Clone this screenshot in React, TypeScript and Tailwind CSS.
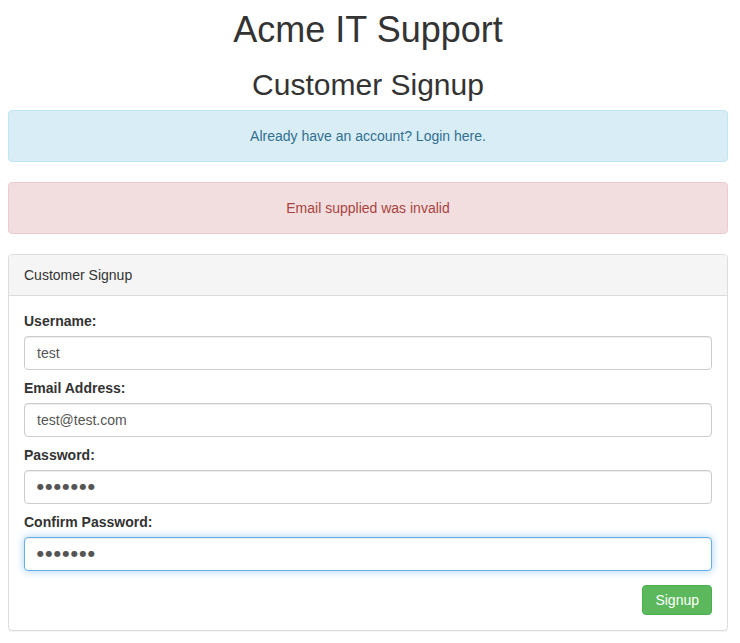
export default function App() {
  const font = { fontFamily: '"Liberation Sans", Arial, sans-serif' };
  const dots = { fontFamily: '"DejaVu Sans", sans-serif' };
  const fields = [
    { label: "Username:", value: "test" },
    { label: "Email Address:", value: "test@test.com" },
    { label: "Password:", value: "●●●●●●●", secret: true },
    { label: "Confirm Password:", value: "●●●●●●●", secret: true, focus: true },
  ];

  return (
    <div style={font} className="min-h-screen bg-white text-[14px] leading-[20px] text-[#333]">
      <div className="ml-[8px] w-[720px]">
        <h1 className="mt-[10px] text-center text-[36px] leading-[1.1]">Acme IT Support</h1>
        <h2 className="mt-[18px] mb-[9px] text-center text-[30px] leading-[1.1]">Customer Signup</h2>

        <div className="rounded-[4px] border border-[#bce8f1] bg-[#d9edf7] p-[15px] text-center text-[#31708f]">
          Already have an account? <a className="text-[#31708f]">Login here.</a>
        </div>

        <div className="mt-[20px] rounded-[4px] border border-[#ebccd1] bg-[#f2dede] p-[15px] text-center text-[#a94442]">
          Email supplied was invalid
        </div>

        <div className="mt-[20px] rounded-[4px] border border-[#ddd] bg-white shadow-[0_1px_1px_rgba(0,0,0,0.05)]">
          <div className="rounded-t-[3px] border-b border-[#ddd] bg-[#f5f5f5] px-[15px] py-[10px]">
            Customer Signup
          </div>
          <div className="p-[15px]">
            {fields.map((f) => (
              <div key={f.label} className="mb-[8px]">
                <label className="mb-[5px] block font-bold">{f.label}</label>
                <input
                  type="text"
                  defaultValue={f.value}
                  readOnly
                  className={
                    (f.focus
                      ? "border-[#66afe9] shadow-[inset_0_1px_1px_rgba(0,0,0,0.075),0_0_8px_rgba(102,175,233,0.6)] "
                      : "border-[#ccc] shadow-[inset_0_1px_1px_rgba(0,0,0,0.075)] ") +
                    (f.secret ? "text-[8px] tracking-[1.5px] " : "text-[14px] ") +
                    "block h-[34px] w-full rounded-[4px] border bg-white px-[12px] py-[6px] text-[#555] outline-none"
                  }
                  style={f.secret ? dots : font}
                />
              </div>
            ))}
            <div className="mt-[14px] flex justify-end">
              <button
                style={font}
                className="h-[30px] rounded-[4px] border border-[#4cae4c] bg-[#5cb85c] px-[12px] text-[14px] text-white"
              >
                Signup
              </button>
            </div>
          </div>
        </div>
      </div>
    </div>
  );
}
